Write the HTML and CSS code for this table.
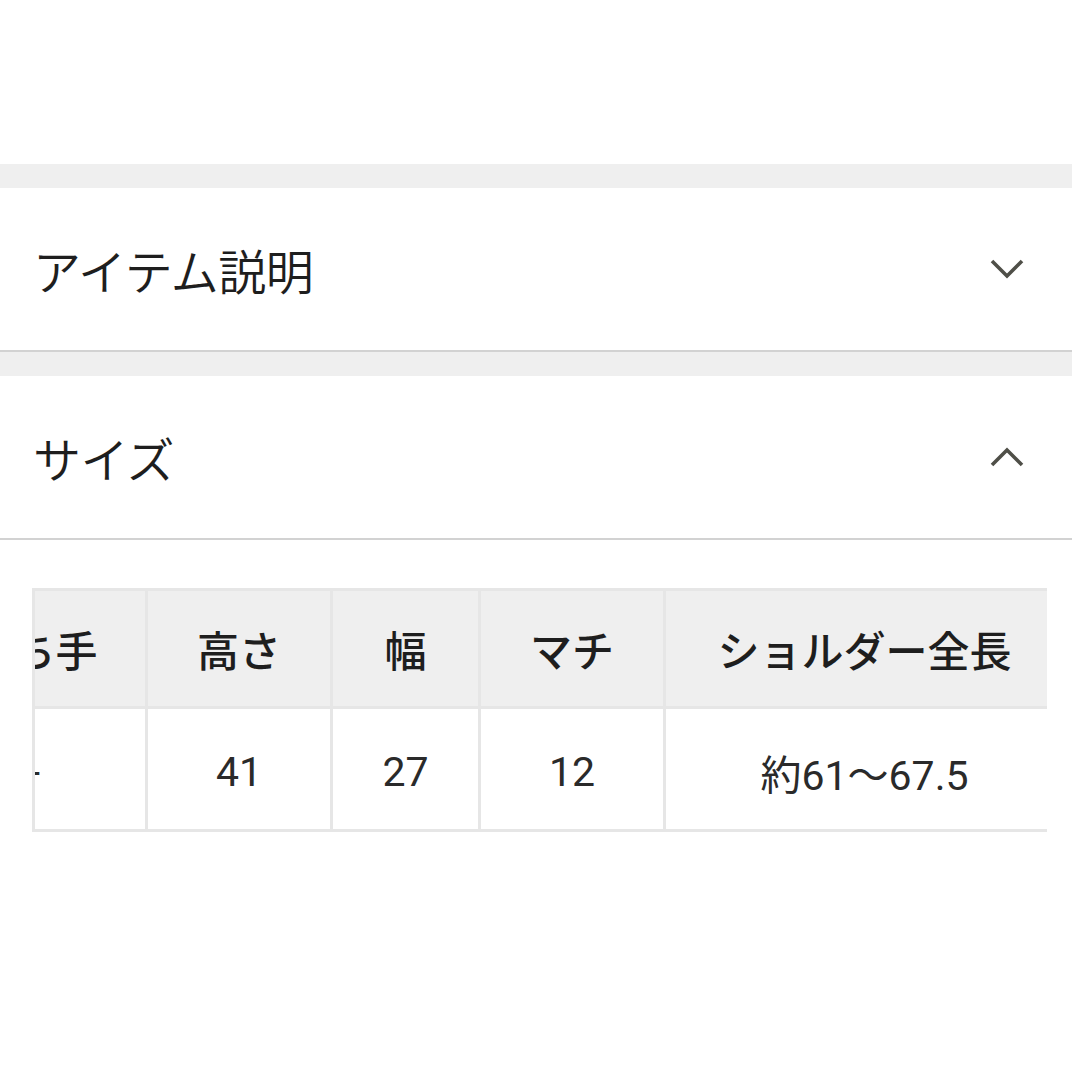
FILE: index.html
```html
<!DOCTYPE html>
<html lang="ja">
<head>
<meta charset="utf-8">
<title>サイズ</title>
<link rel="stylesheet" href="styles.css">
</head>
<body>
<div class="page">
  <div class="top-space"></div>
  <div class="band"></div>
  <section class="acc">
    <h2 class="acc-title">アイテム説明</h2>
    <svg class="chev" width="34" height="20" viewBox="0 0 34 20"><polyline points="2,2 17,17 32,2" fill="none" stroke="#4f4f48" stroke-width="3.6"/></svg>
  </section>
  <div class="band"></div>
  <section class="acc">
    <h2 class="acc-title">サイズ</h2>
    <svg class="chev" width="34" height="20" viewBox="0 0 34 20"><polyline points="2,18 17,3 32,18" fill="none" stroke="#4f4f48" stroke-width="3.6"/></svg>
  </section>
  <div class="table-area">
    <div class="scroller">
      <table class="size-table">
        <thead>
          <tr>
            <th class="c1">持ち手</th>
            <th class="c2">高さ</th>
            <th class="c3">幅</th>
            <th class="c4">マチ</th>
            <th class="c5">ショルダー全長</th>
          </tr>
        </thead>
        <tbody>
          <tr>
            <td>-</td>
            <td>41</td>
            <td>27</td>
            <td>12</td>
            <td>約61〜67.5</td>
          </tr>
        </tbody>
      </table>
    </div>
  </div>
</div>
</body>
</html>
```
FILE: styles.css
```css
html, body {
  margin: 0;
  padding: 0;
  background: #ffffff;
}
body {
  font-family: "Noto Sans CJK JP", "Noto Sans", sans-serif;
  color: #222222;
}
.page {
  width: 1072px;
  height: 1080px;
  background: #ffffff;
}
.top-space {
  height: 164px;
}
.band {
  height: 24px;
  background: #efefef;
}
.acc {
  height: 162px;
  display: flex;
  align-items: center;
  justify-content: space-between;
  padding: 0 48px 0 33px;
  border-bottom: 2px solid #d2d2d2;
  background: #ffffff;
}
.acc-title {
  margin: 0;
  font-size: 48px;
  font-weight: 350;
  line-height: 1;
  color: #1e1e1e;
  letter-spacing: -0.5px;
}
.chev {
  display: block;
}
.table-area {
  padding: 48px 0 0 32px;
}
.scroller {
  width: 1012px;
  overflow: hidden;
  border-left: 3px solid #e6e6e6;
}
.size-table {
  margin-left: -111px;
  border-collapse: separate;
  border-spacing: 0;
  table-layout: fixed;
  width: 1142px;
  border-top: 3px solid #e6e6e6;
  font-family: Roboto, "Noto Sans CJK JP", sans-serif;
}
.size-table th,
.size-table td {
  box-sizing: border-box;
  border-right: 3px solid #e6e6e6;
  border-bottom: 3px solid #e6e6e6;
  text-align: center;
  padding: 0;
  white-space: nowrap;
}
.size-table th {
  height: 118px;
  background: #efefef;
  font-size: 42px;
  font-weight: 500;
  color: #1e1e1e;
  font-family: "Noto Sans CJK JP", sans-serif;
}
.size-table td {
  height: 123px;
  background: #ffffff;
  font-size: 41px;
  font-weight: 400;
  color: #2a2a2a;
  padding-top: 6px;
}
.c1 { width: 224px; }
.c2 { width: 185px; }
.c3 { width: 148px; }
.c4 { width: 185px; }
.c5 { width: 400px; }
```
